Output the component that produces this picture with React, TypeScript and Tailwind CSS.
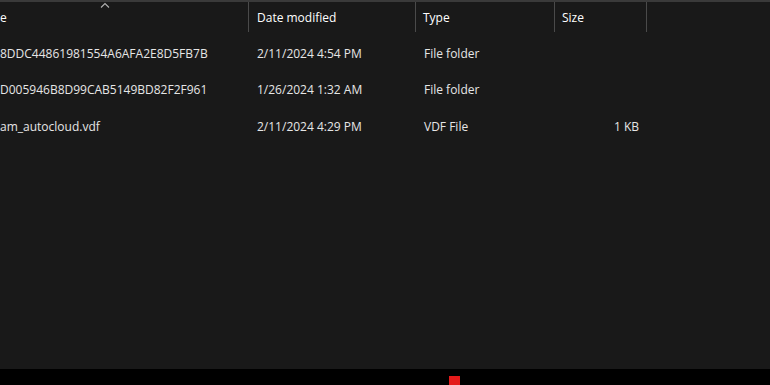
import React from 'react'

type Row = { name: string; date: string; type: string; size: string }

const rows: Row[] = [
  { name: '8DDC44861981554A6AFA2E8D5FB7B', date: '2/11/2024 4:54 PM', type: 'File folder', size: '' },
  { name: 'D005946B8D99CAB5149BD82F2F961', date: '1/26/2024 1:32 AM', type: 'File folder', size: '' },
  { name: 'am_autocloud.vdf', date: '2/11/2024 4:29 PM', type: 'VDF File', size: '1 KB' },
]

function Divider() {
  return <div className="w-px h-[30px] bg-[#4a4a4a] self-start" />
}

export default function App() {
  return (
    <div
      className="w-[770px] h-[385px] bg-[#191919] flex flex-col text-[12px] text-[#e6e6e6] overflow-hidden"
      style={{ fontFamily: '"Open Sans", "Noto Sans", sans-serif' }}
    >
      <div className="h-[2px] bg-[#3a3a3a]" />
      {/* header */}
      <div className="relative flex h-[32px]">
        <div className="w-[248px] flex items-center pl-0 text-white">e</div>
        <span className="absolute left-[100px] top-[0px] leading-none">
          <svg width="10" height="6" viewBox="0 0 10 6" className="block">
            <path d="M1 5.5 L5 1.5 L9 5.5" stroke="#b0b0b0" strokeWidth="1.1" fill="none" />
          </svg>
        </span>
        <Divider />
        <div className="w-[166px] flex items-center pl-[8px] text-white">Date modified</div>
        <Divider />
        <div className="w-[138px] flex items-center pl-[7px] text-white">Type</div>
        <Divider />
        <div className="w-[91px] flex items-center pl-[7px] text-white">Size</div>
        <Divider />
      </div>
      {/* rows */}
      <div className="flex flex-col pt-[2px]">
        {rows.map((r) => (
          <div key={r.name} className="flex h-[36.3px] items-center">
            <div className="w-[249px] whitespace-nowrap overflow-hidden">{r.name}</div>
            <div className="w-[167px] pl-[8px]">{r.date}</div>
            <div className="w-[139px] pl-[8px]">{r.type}</div>
            <div className="w-[84px] text-right">{r.size}</div>
          </div>
        ))}
      </div>
      <div className="flex-1" />
      <div className="h-[16px] bg-black relative">
        <div className="absolute left-[449px] top-[7px] w-[11px] h-[9px] bg-[#e41a1a]" />
      </div>
    </div>
  )
}
